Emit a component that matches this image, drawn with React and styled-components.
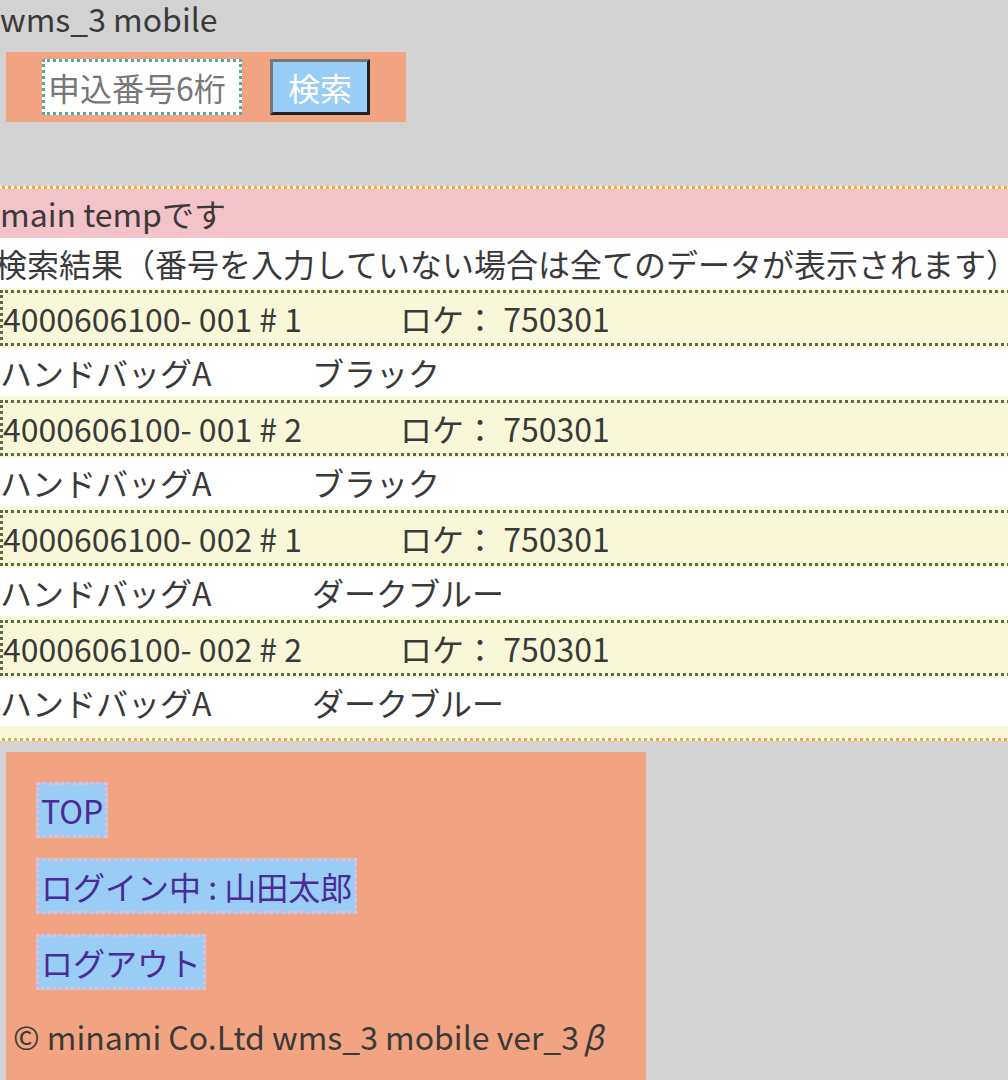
import styled, { createGlobalStyle } from "styled-components";

const GlobalStyle = createGlobalStyle`
  body {
    margin: 0;
    background: #d3d3d3;
    color: #3a3a3a;
    font-family: "Noto Sans CJK JP", "Noto Sans", sans-serif;
    font-size: 32px;
    overflow-x: hidden;
  }
`;

const Header = styled.header`
  line-height: 36px;
`;

const SearchForm = styled.form`
  display: flex;
  align-items: center;
  justify-content: center;
  gap: 28px;
  width: 400px;
  height: 70px;
  margin: 16px 0 0 6px;
  background: #f2a482;
`;

const SearchInput = styled.input`
  box-sizing: border-box;
  width: 200px;
  height: 56px;
  padding: 0 3px;
  border: 3px dotted #5aa89a;
  background: #fff;
  font-family: inherit;
  font-size: 32px;
  color: #3a3a3a;
  outline: none;
  &::placeholder {
    color: #777;
  }
`;

const SearchButton = styled.button`
  box-sizing: border-box;
  width: 100px;
  height: 56px;
  padding: 0;
  border: 3px solid;
  border-color: #777 #222 #222 #777;
  background: #99cdf5;
  color: #fff;
  font-family: inherit;
  font-size: 32px;
`;

const Main = styled.main`
  width: calc(100% + 20px);
  margin: 64px 0 0 -3px;
  padding-bottom: 8px;
  border: 3px dotted #f0a840;
  background: #f8f8d8;
`;

const MainTitle = styled.div`
  background: #f4c2c9;
  line-height: 49px;
`;

const ResultTitle = styled.div`
  background: #fff;
  line-height: 50px;
  text-indent: -5px;
  white-space: nowrap;
`;

const List = styled.ul`
  list-style: none;
  margin: 0;
  padding: 2px 0 0;
`;

const Item = styled.li`
  margin-bottom: 4px;
`;

const ItemHead = styled.div`
  display: flex;
  border: 3px dotted #5b6b3b;
  line-height: 50px;
  white-space: nowrap;
`;

const ItemLine = styled.div`
  display: flex;
  margin-top: 2px;
  background: #fff;
  line-height: 48px;
  white-space: nowrap;
`;

const Cell = styled.span`
  flex: 0 0 ${(p) => p.$w || "auto"};
`;

const Footer = styled.footer`
  width: 640px;
  margin: 11px 0 0 6px;
  padding: 30px 0 40px;
  background: #f2a482;
`;

const NavList = styled.nav`
  display: flex;
  flex-direction: column;
  align-items: flex-start;
  gap: 20px;
  padding-left: 30px;
`;

const NavLink = styled.a`
  padding: 1px 2px;
  border: 3px dotted #f4b8c8;
  background: #99cdf5;
  color: #4b2a98;
  line-height: 48px;
  text-decoration: none;
`;

const Copy = styled.p`
  margin: 22px 0 0;
  padding-left: 7px;
  line-height: 48px;
`;

const Beta = styled.i`
  margin-left: 4px;
`;

const items = [
  { no: "4000606100- 001 # 1", name: "ハンドバッグA", color: "ブラック" },
  { no: "4000606100- 001 # 2", name: "ハンドバッグA", color: "ブラック" },
  { no: "4000606100- 002 # 1", name: "ハンドバッグA", color: "ダークブルー" },
  { no: "4000606100- 002 # 2", name: "ハンドバッグA", color: "ダークブルー" },
];

const App = () => {
  return (
    <>
      <GlobalStyle />
      <Header>wms_3 mobile</Header>
      <SearchForm onSubmit={(e) => e.preventDefault()}>
        <SearchInput placeholder="申込番号6桁" />
        <SearchButton type="submit">検索</SearchButton>
      </SearchForm>
      <Main>
        <MainTitle>main tempです</MainTitle>
        <ResultTitle>
          検索結果（番号を入力していない場合は全てのデータが表示されます）
        </ResultTitle>
        <List>
          {items.map((it, i) => (
            <Item key={i}>
              <ItemHead>
                <Cell $w="397px">{it.no}</Cell>
                <Cell>ロケ： 750301</Cell>
              </ItemHead>
              <ItemLine>
                <Cell $w="312px">{it.name}</Cell>
                <Cell>{it.color}</Cell>
              </ItemLine>
            </Item>
          ))}
        </List>
      </Main>
      <Footer>
        <NavList>
          <NavLink href="#">TOP</NavLink>
          <NavLink href="#">ログイン中 : 山田太郎</NavLink>
          <NavLink href="#">ログアウト</NavLink>
        </NavList>
        <Copy>
          © minami Co.Ltd wms_3 mobile ver_3<Beta>β</Beta>
        </Copy>
      </Footer>
    </>
  );
};

export default App;
